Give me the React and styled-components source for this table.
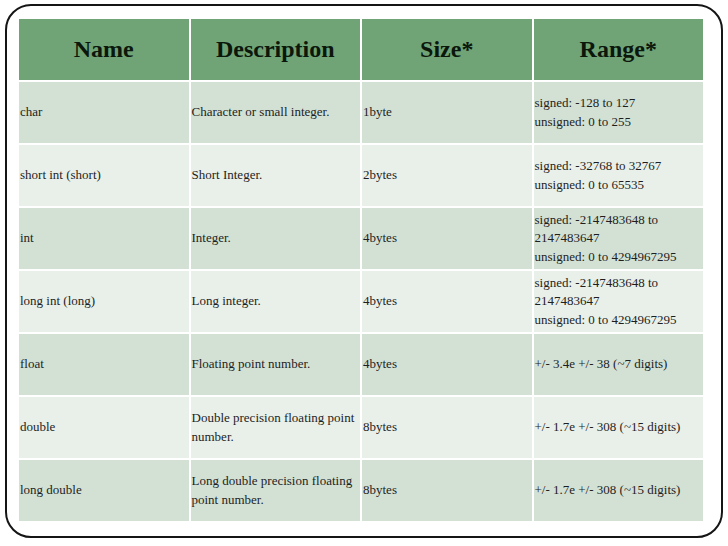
import React from 'react';
import styled, { createGlobalStyle } from 'styled-components';

const serif = '"Liberation Serif", "Times New Roman", serif';

const GlobalStyle = createGlobalStyle`
  html, body {
    margin: 0;
    padding: 0;
    background: #ffffff;
  }
`;

const Slide = styled.div`
  box-sizing: border-box;
  width: 718px;
  height: 534px;
  margin: 4px 0 0 5px;
  border: 2px solid #151515;
  border-radius: 26px;
  padding: 13px 0 0 12px;
  font-family: ${serif};
`;

const Table = styled.div`
  display: flex;
  flex-direction: column;
  gap: 2px;
  width: 684px;
`;

const Row = styled.div`
  display: grid;
  grid-template-columns: repeat(4, 1fr);
  gap: 2px;
  height: 61px;
`;

const HeadCell = styled.div`
  display: flex;
  align-items: center;
  justify-content: center;
  background: #70a477;
  color: #0c170c;
  font-family: ${serif};
  font-size: 24px;
  font-weight: bold;
`;

const Cell = styled.div`
  display: flex;
  align-items: center;
  padding: 0 2px 0 1px;
  background: ${props => (props.$odd ? '#d3e1d5' : '#e9f0ea')};
  font-family: ${serif};
  font-size: 13px;
  line-height: 18.5px;
  color: #1e1e1e;
`;

const columns = ['Name', 'Description', 'Size*', 'Range*'];

const rows = [
  ['char', 'Character or small integer.', '1byte', ['signed: -128 to 127', 'unsigned: 0 to 255']],
  ['short int (short)', 'Short Integer.', '2bytes', ['signed: -32768 to 32767', 'unsigned: 0 to 65535']],
  ['int', 'Integer.', '4bytes', ['signed: -2147483648 to 2147483647', 'unsigned: 0 to 4294967295']],
  ['long int (long)', 'Long integer.', '4bytes', ['signed: -2147483648 to 2147483647', 'unsigned: 0 to 4294967295']],
  ['float', 'Floating point number.', '4bytes', ['+/- 3.4e +/- 38 (~7 digits)']],
  ['double', 'Double precision floating point number.', '8bytes', ['+/- 1.7e +/- 308 (~15 digits)']],
  ['long double', 'Long double precision floating point number.', '8bytes', ['+/- 1.7e +/- 308 (~15 digits)']],
];

export default function App() {
  return (
    <>
      <GlobalStyle />
      <Slide>
        <Table>
          <Row>
            {columns.map(c => (
              <HeadCell key={c}>{c}</HeadCell>
            ))}
          </Row>
          {rows.map(([name, desc, size, range], i) => {
            const odd = i % 2 === 0;
            return (
              <Row key={name}>
                <Cell $odd={odd}>{name}</Cell>
                <Cell $odd={odd}>{desc}</Cell>
                <Cell $odd={odd}>{size}</Cell>
                <Cell $odd={odd}>
                  <div>
                    {range.map((line, j) => (
                      <React.Fragment key={j}>
                        {j > 0 && <br />}
                        {line}
                      </React.Fragment>
                    ))}
                  </div>
                </Cell>
              </Row>
            );
          })}
        </Table>
      </Slide>
    </>
  );
}
